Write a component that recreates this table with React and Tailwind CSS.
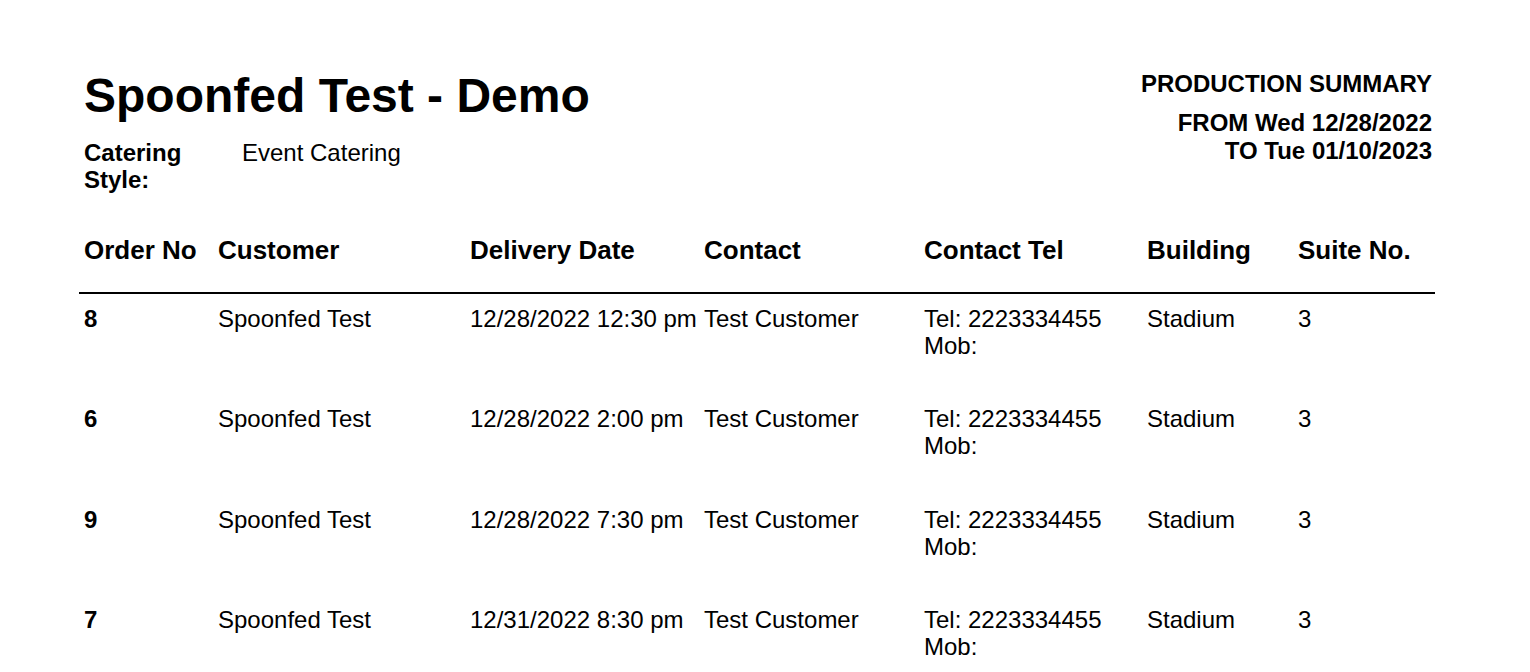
export default function App() {
  const rows = [
    { no: "8", date: "12/28/2022 12:30 pm" },
    { no: "6", date: "12/28/2022 2:00 pm" },
    { no: "9", date: "12/28/2022 7:30 pm" },
    { no: "7", date: "12/31/2022 8:30 pm" },
  ];
  const cols = "grid grid-cols-[134px_252px_234px_220px_223px_151px_142px]";
  return (
    <div className="min-h-[672px] w-[1530px] overflow-hidden bg-white text-black font-['Liberation_Sans',Arial,sans-serif]">
      <div className="ml-[79px] w-[1356px] pt-[68px]">
        <div className="flex justify-between pl-[5px] pr-[3px]">
          <div>
            <h1 className="text-[48px] leading-[56px] font-bold">Spoonfed Test - Demo</h1>
            <div className="mt-[15px] flex text-[24px] leading-[27px]">
              <div className="w-[158px] font-bold">
                Catering
                <br />
                Style:
              </div>
              <div>Event Catering</div>
            </div>
          </div>
          <div className="pt-[2px] text-right text-[24px] font-bold leading-[28px]">
            <div>PRODUCTION SUMMARY</div>
            <div className="mt-[11px]">FROM Wed 12/28/2022</div>
            <div>TO Tue 01/10/2023</div>
          </div>
        </div>
        <div className={`${cols} mt-[42px] border-b-2 border-black pb-[27px] text-[26px] font-bold leading-[30px]`}>
          {["Order No", "Customer", "Delivery Date", "Contact", "Contact Tel", "Building", "Suite No."].map((h) => (
            <div key={h} className="pl-[5px]">{h}</div>
          ))}
        </div>
        <div>
          {rows.map((r) => (
            <div key={r.no} className={`${cols} h-[100.33px] pt-[11px] text-[24px] leading-[27px]`}>
              <div className="pl-[5px] font-bold">{r.no}</div>
              <div className="pl-[5px]">Spoonfed Test</div>
              <div className="pl-[5px] whitespace-nowrap">{r.date}</div>
              <div className="pl-[5px]">Test Customer</div>
              <div className="pl-[5px]">
                Tel: 2223334455
                <br />
                Mob:
              </div>
              <div className="pl-[5px]">Stadium</div>
              <div className="pl-[5px]">3</div>
            </div>
          ))}
        </div>
      </div>
    </div>
  );
}
